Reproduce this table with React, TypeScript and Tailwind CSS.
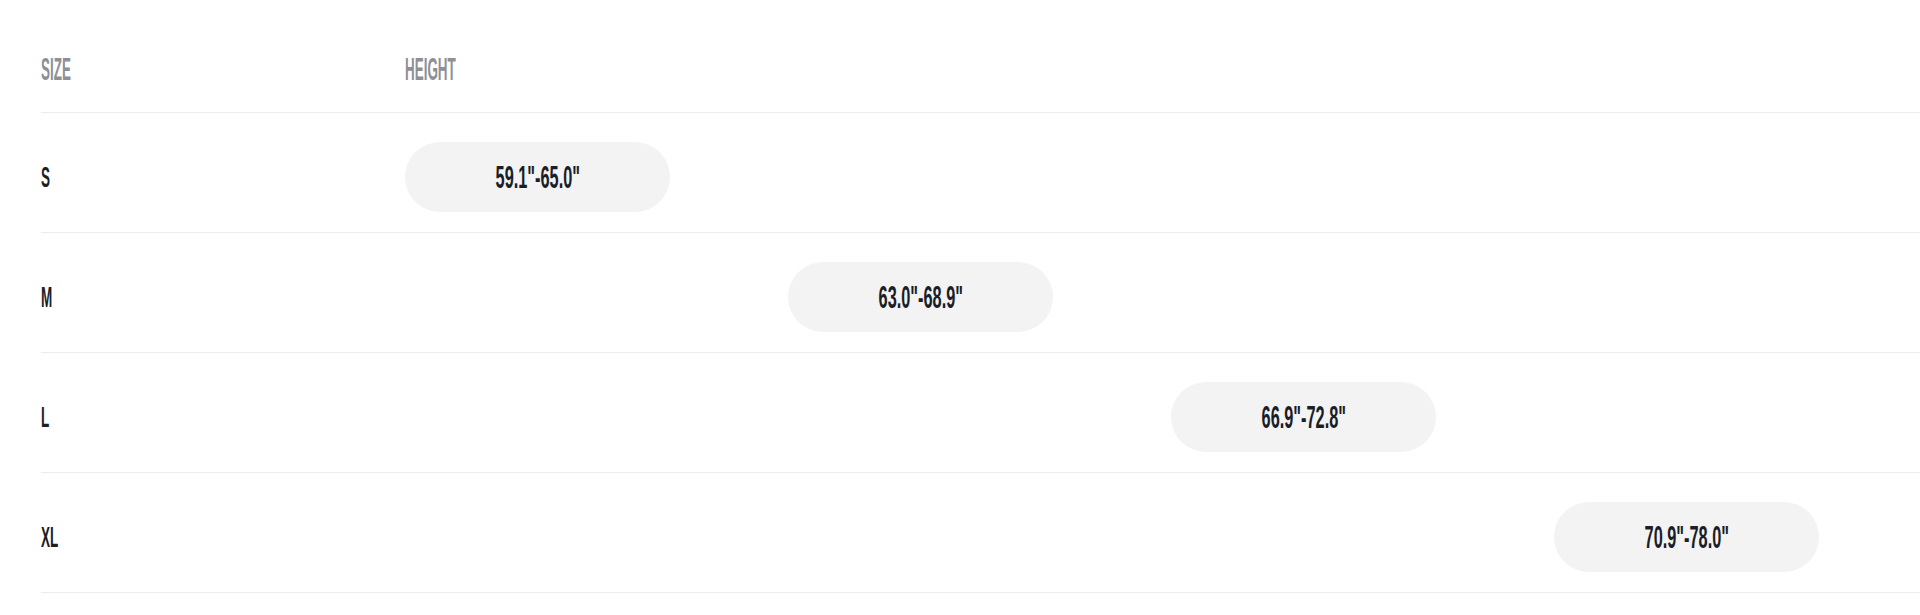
import React from 'react'

const rows = [
  { size: 'S', range: '59.1"-65.0"', col: 0 },
  { size: 'M', range: '63.0"-68.9"', col: 1 },
  { size: 'L', range: '66.9"-72.8"', col: 2 },
  { size: 'XL', range: '70.9"-78.0"', col: 3 },
]

const font = { fontFamily: '"Liberation Sans", Arial, sans-serif' }

export default function App() {
  return (
    <main className="min-h-screen w-full overflow-hidden bg-white" style={font}>
      <div className="pl-[41px] w-[1960px]">
        {/* Header */}
        <div className="flex h-[113px] items-center border-b border-[#ececec] pt-[27px]">
          <div className="w-[364px] shrink-0">
            <span className="inline-block origin-left scale-x-[0.42] text-[32px] font-bold leading-none text-[#8d9095]">SIZE</span>
          </div>
          <div className="flex-1">
            <span className="inline-block origin-left scale-x-[0.42] text-[32px] font-bold leading-none text-[#8d9095]">HEIGHT</span>
          </div>
        </div>

        {/* Rows */}
        {rows.map((r) => (
          <div key={r.size} className="flex h-[120px] items-start border-b border-[#ececec] pt-[29px]">
            <div className="flex h-[70px] w-[364px] shrink-0 items-center">
              <span className="inline-block origin-left scale-x-[0.45] text-[30px] font-bold leading-none text-[#1b1e27]">
                {r.size}
              </span>
            </div>
            {[0, 1, 2, 3].map((i) => (
              <div key={i} className="w-[383px] shrink-0">
                {i === r.col && (
                  <div className="flex h-[70px] w-[265px] items-center justify-center rounded-full bg-[#f3f3f3]">
                    <span className="inline-block scale-x-[0.51] text-[32px] font-bold leading-none text-[#1b1e27]">
                      {r.range}
                    </span>
                  </div>
                )}
              </div>
            ))}
          </div>
        ))}
      </div>
    </main>
  )
}
